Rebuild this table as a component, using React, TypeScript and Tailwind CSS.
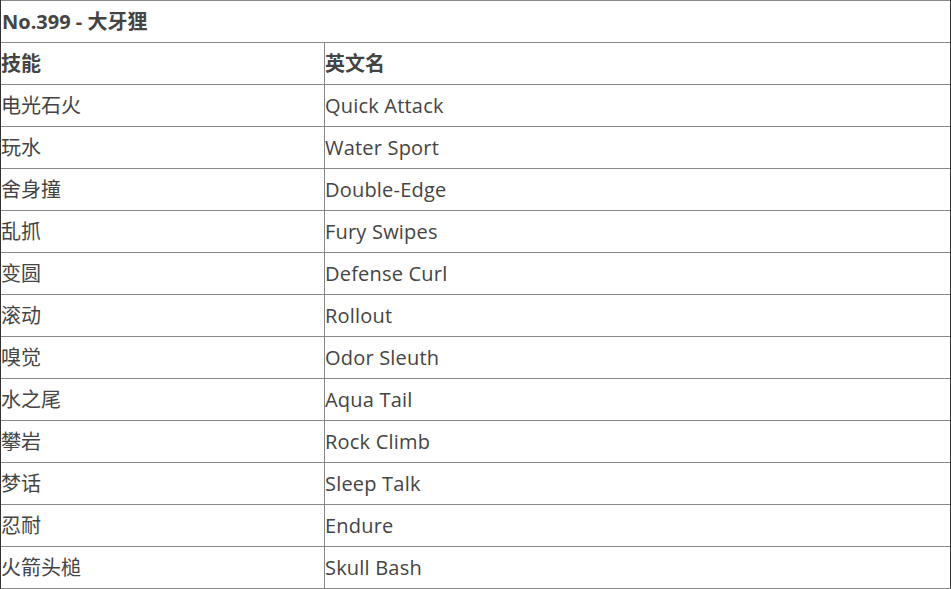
const rows: [string, string][] = [
  ["电光石火", "Quick Attack"],
  ["玩水", "Water Sport"],
  ["舍身撞", "Double-Edge"],
  ["乱抓", "Fury Swipes"],
  ["变圆", "Defense Curl"],
  ["滚动", "Rollout"],
  ["嗅觉", "Odor Sleuth"],
  ["水之尾", "Aqua Tail"],
  ["攀岩", "Rock Climb"],
  ["梦话", "Sleep Talk"],
  ["忍耐", "Endure"],
  ["火箭头槌", "Skull Bash"],
];

export default function App() {
  return (
    <div className="w-[951px] bg-white text-[#444] text-[20px] font-['Open_Sans','Noto_Sans_CJK_SC',sans-serif]">
      <div className="border-l border-r border-b border-l-[#333] border-r-[#333] border-b-[#888]">
        {/* 标题 */}
        <div className="h-[42px] border-t border-[#888] flex items-center font-bold pl-px">
          No.399 - 大牙狸
        </div>
        {/* 表头 */}
        <div className="h-[42px] border-t border-[#888] grid grid-cols-[324px_1fr] font-bold">
          <div className="flex items-center border-r border-[#888]">技能</div>
          <div className="flex items-center">英文名</div>
        </div>
        {rows.map(([zh, en]) => (
          <div key={en} className="h-[42px] border-t border-[#888] grid grid-cols-[324px_1fr]">
            <div className="flex items-center border-r border-[#888]">{zh}</div>
            <div className="flex items-center tracking-[0.2px]">{en}</div>
          </div>
        ))}
      </div>
    </div>
  );
}
